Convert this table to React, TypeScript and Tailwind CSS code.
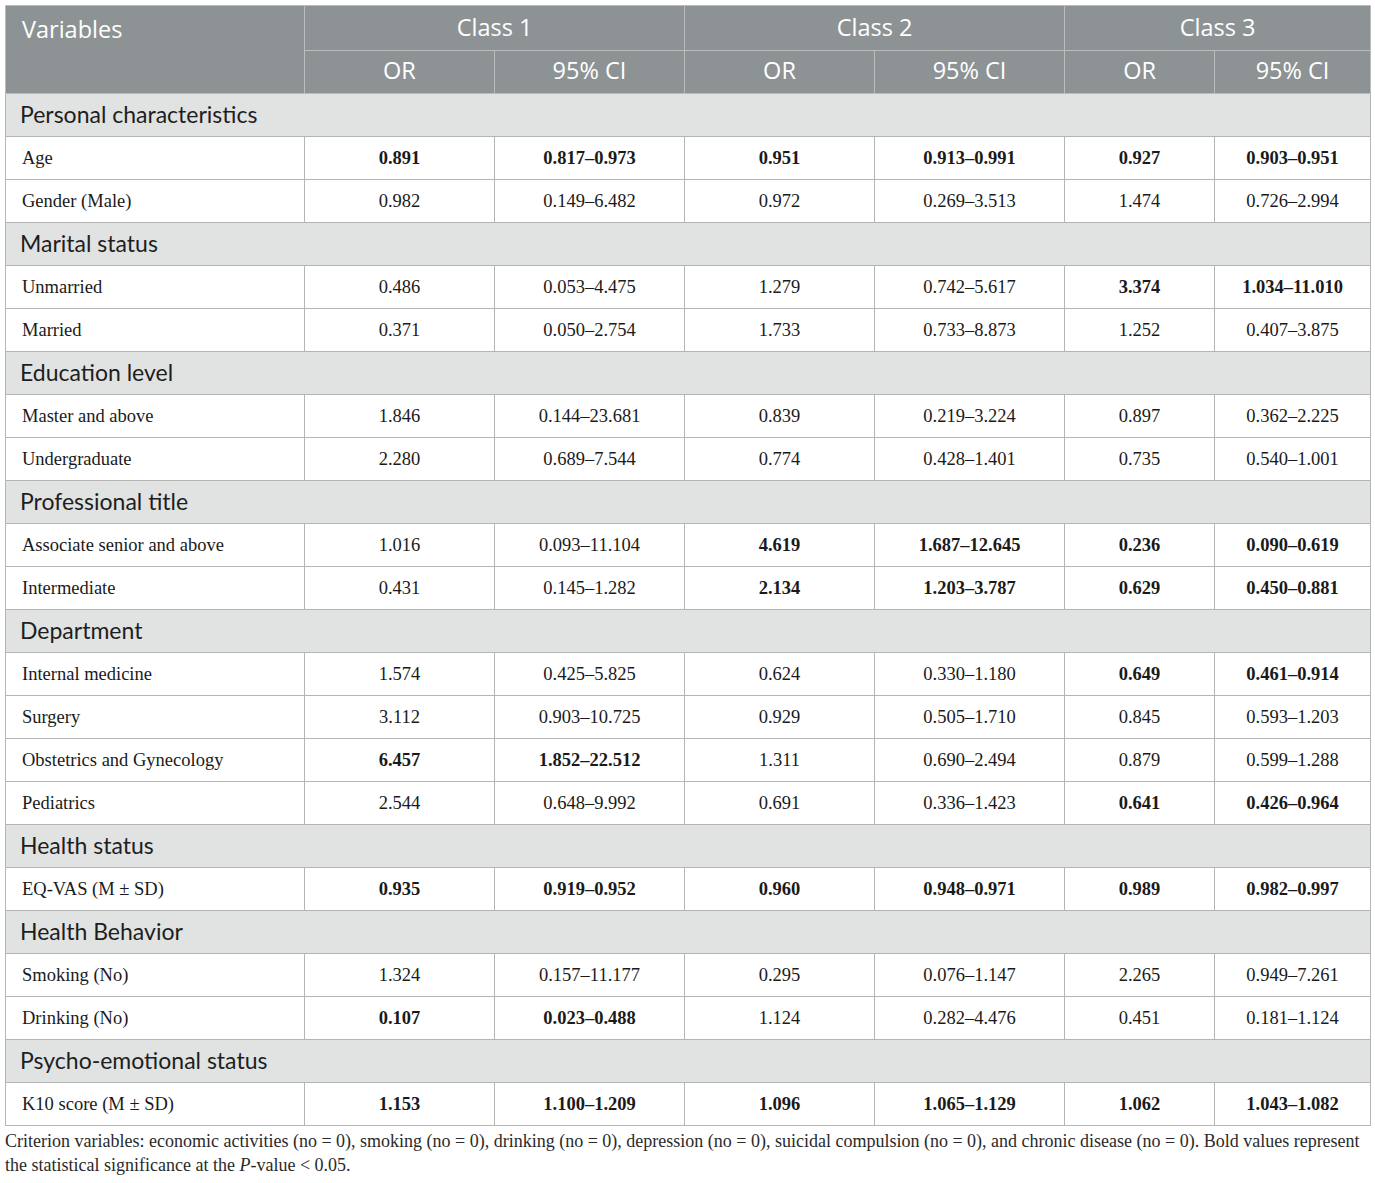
import React from 'react';

type Row =
  | { kind: 'section'; label: string }
  | { kind: 'data'; label: string; values: string[]; bold: boolean[] };

const B = true;
const N = false;

const rows: Row[] = [
  { kind: 'section', label: 'Personal characteristics' },
  { kind: 'data', label: 'Age', values: ['0.891', '0.817–0.973', '0.951', '0.913–0.991', '0.927', '0.903–0.951'], bold: [B, B, B, B, B, B] },
  { kind: 'data', label: 'Gender (Male)', values: ['0.982', '0.149–6.482', '0.972', '0.269–3.513', '1.474', '0.726–2.994'], bold: [N, N, N, N, N, N] },
  { kind: 'section', label: 'Marital status' },
  { kind: 'data', label: 'Unmarried', values: ['0.486', '0.053–4.475', '1.279', '0.742–5.617', '3.374', '1.034–11.010'], bold: [N, N, N, N, B, B] },
  { kind: 'data', label: 'Married', values: ['0.371', '0.050–2.754', '1.733', '0.733–8.873', '1.252', '0.407–3.875'], bold: [N, N, N, N, N, N] },
  { kind: 'section', label: 'Education level' },
  { kind: 'data', label: 'Master and above', values: ['1.846', '0.144–23.681', '0.839', '0.219–3.224', '0.897', '0.362–2.225'], bold: [N, N, N, N, N, N] },
  { kind: 'data', label: 'Undergraduate', values: ['2.280', '0.689–7.544', '0.774', '0.428–1.401', '0.735', '0.540–1.001'], bold: [N, N, N, N, N, N] },
  { kind: 'section', label: 'Professional title' },
  { kind: 'data', label: 'Associate senior and above', values: ['1.016', '0.093–11.104', '4.619', '1.687–12.645', '0.236', '0.090–0.619'], bold: [N, N, B, B, B, B] },
  { kind: 'data', label: 'Intermediate', values: ['0.431', '0.145–1.282', '2.134', '1.203–3.787', '0.629', '0.450–0.881'], bold: [N, N, B, B, B, B] },
  { kind: 'section', label: 'Department' },
  { kind: 'data', label: 'Internal medicine', values: ['1.574', '0.425–5.825', '0.624', '0.330–1.180', '0.649', '0.461–0.914'], bold: [N, N, N, N, B, B] },
  { kind: 'data', label: 'Surgery', values: ['3.112', '0.903–10.725', '0.929', '0.505–1.710', '0.845', '0.593–1.203'], bold: [N, N, N, N, N, N] },
  { kind: 'data', label: 'Obstetrics and Gynecology', values: ['6.457', '1.852–22.512', '1.311', '0.690–2.494', '0.879', '0.599–1.288'], bold: [B, B, N, N, N, N] },
  { kind: 'data', label: 'Pediatrics', values: ['2.544', '0.648–9.992', '0.691', '0.336–1.423', '0.641', '0.426–0.964'], bold: [N, N, N, N, B, B] },
  { kind: 'section', label: 'Health status' },
  { kind: 'data', label: 'EQ-VAS (M ± SD)', values: ['0.935', '0.919–0.952', '0.960', '0.948–0.971', '0.989', '0.982–0.997'], bold: [B, B, B, B, B, B] },
  { kind: 'section', label: 'Health Behavior' },
  { kind: 'data', label: 'Smoking (No)', values: ['1.324', '0.157–11.177', '0.295', '0.076–1.147', '2.265', '0.949–7.261'], bold: [N, N, N, N, N, N] },
  { kind: 'data', label: 'Drinking (No)', values: ['0.107', '0.023–0.488', '1.124', '0.282–4.476', '0.451', '0.181–1.124'], bold: [B, B, N, N, N, N] },
  { kind: 'section', label: 'Psycho-emotional status' },
  { kind: 'data', label: 'K10 score (M ± SD)', values: ['1.153', '1.100–1.209', '1.096', '1.065–1.129', '1.062', '1.043–1.082'], bold: [B, B, B, B, B, B] },
];

const sans = "font-['Lato','Open_Sans',sans-serif]";
const headSans = "font-['Open_Sans','Lato',sans-serif]";
const serif = "font-['Liberation_Serif',serif]";

export default function App() {
  return (
    <div className="w-[1375px] h-[1183px] bg-white px-[5px] pt-[5px]">
      <table className="w-[1365px] border-collapse table-fixed">
        <colgroup>
          <col className="w-[299px]" />
          <col className="w-[190px]" />
          <col className="w-[190px]" />
          <col className="w-[190px]" />
          <col className="w-[190px]" />
          <col className="w-[150px]" />
          <col className="w-[156px]" />
        </colgroup>
        <thead className={`${headSans} text-white text-[23.5px] font-normal`}>
          <tr className="h-[45px] bg-[#8d9395]">
            <th rowSpan={2} className="border border-[#b9bdbe] text-left align-top pl-[16px] pt-[9px] font-normal leading-[28px]">
              Variables
            </th>
            <th colSpan={2} className="border border-[#b9bdbe] font-normal">Class 1</th>
            <th colSpan={2} className="border border-[#b9bdbe] font-normal">Class 2</th>
            <th colSpan={2} className="border border-[#b9bdbe] font-normal">Class 3</th>
          </tr>
          <tr className="h-[43px] bg-[#8d9395]">
            {['OR', '95% CI', 'OR', '95% CI', 'OR', '95% CI'].map((h, i) => (
              <th key={i} className="border border-[#b9bdbe] font-normal pb-[2px]">{h}</th>
            ))}
          </tr>
        </thead>
        <tbody>
          {rows.map((r, i) =>
            r.kind === 'section' ? (
              <tr key={i} className="h-[43px] bg-[#e1e3e2]">
                <td colSpan={7} className={`${sans} border border-[#b4b6b6] text-[23px] text-[#1e1e1e] pl-[14px] pb-[2px]`}>
                  {r.label}
                </td>
              </tr>
            ) : (
              <tr key={i} className={`h-[43px] bg-white ${serif} text-[18.5px] text-[#1a1a1a]`}>
                <td className="border border-[#b4b6b6] pl-[16px] pt-[2px]">{r.label}</td>
                {r.values.map((v, j) => (
                  <td key={j} className={`border border-[#b4b6b6] text-center pt-[2px] ${r.bold[j] ? 'font-bold' : ''}`}>
                    {v}
                  </td>
                ))}
              </tr>
            )
          )}
        </tbody>
      </table>
      <p className={`${serif} text-[18px] leading-[24px] text-[#2a2a2a] mt-[3px]`}>
        Criterion variables: economic activities (no = 0), smoking (no = 0), drinking (no = 0), depression (no = 0), suicidal compulsion (no = 0), and chronic disease (no = 0). Bold values represent the statistical significance at the <i>P</i>-value &lt; 0.05.
      </p>
    </div>
  );
}
